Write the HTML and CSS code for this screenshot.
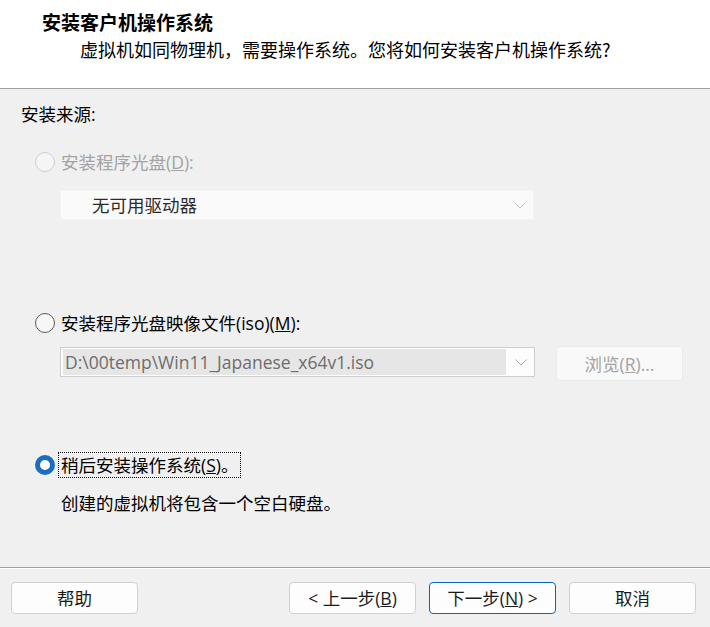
FILE: index.html
```html
<!DOCTYPE html>
<html lang="zh-CN">
<head>
<meta charset="utf-8">
<title>安装客户机操作系统</title>
<link rel="stylesheet" href="styles.css">
</head>
<body>
<div class="dialog">
  <header class="head">
    <h1 class="head-title">安装客户机操作系统</h1>
    <p class="head-sub">虚拟机如同物理机，需要操作系统。您将如何安装客户机操作系统?</p>
  </header>

  <main class="content">
    <div class="group-label">安装来源:</div>

    <div class="option option-first disabled">
      <span class="radio radio-disabled"></span>
      <span class="option-label">安装程序光盘(<u>D</u>):</span>
    </div>
    <div class="combo combo-disabled">
      <span class="combo-text">无可用驱动器</span>
      <svg class="chev" width="12" height="7" viewBox="0 0 12 7"><polyline points="0.5,0.5 6,6 11.5,0.5" fill="none" stroke="#bdbdbd" stroke-width="1"/></svg>
    </div>

    <div class="option option-second">
      <span class="radio"></span>
      <span class="option-label">安装程序光盘映像文件(iso)(<u>M</u>):</span>
    </div>
    <div class="file-row">
      <div class="combo combo-file">
        <span class="combo-sel">D:\00temp\Win11_Japanese_x64v1.iso</span>
        <svg class="chev" width="12" height="7" viewBox="0 0 12 7"><polyline points="0.5,0.5 6,6 11.5,0.5" fill="none" stroke="#a8a8a8" stroke-width="1"/></svg>
      </div>
      <button class="btn btn-browse">浏览(<u>R</u>)...</button>
    </div>

    <div class="option option-third">
      <span class="radio radio-checked"></span>
      <span class="option-label focus">稍后安装操作系统(<u>S</u>)。</span>
    </div>
    <p class="desc">创建的虚拟机将包含一个空白硬盘。</p>
  </main>

  <footer class="foot">
    <button class="btn btn-help">帮助</button>
    <div class="foot-right">
      <button class="btn">&lt; 上一步(<u>B</u>)</button>
      <button class="btn btn-default">下一步(<u>N</u>) &gt;</button>
      <button class="btn">取消</button>
    </div>
  </footer>
</div>
</body>
</html>
```
FILE: styles.css
```css
* { box-sizing: border-box; }
html, body { margin: 0; padding: 0; }
body {
  width: 710px;
  height: 627px;
  overflow: hidden;
  background: #f0f0f0;
  font-family: "Open Sans", "Noto Sans CJK SC", sans-serif;
  font-size: 17.5px;
  color: #000;
}
.dialog {
  display: flex;
  flex-direction: column;
  height: 627px;
}
.head {
  background: #fff;
  height: 89px;
  border-bottom: 1px solid #a0a0a0;
  padding: 10px 0 0 42px;
}
.head-title {
  margin: 0;
  font-family: "Noto Sans CJK SC", sans-serif;
  font-size: 19px;
  font-weight: 700;
  line-height: 24px;
}
.head-sub {
  margin: 3px 0 0 38px;
  font-family: "Noto Sans CJK SC", sans-serif;
  font-size: 18px;
  line-height: 24px;
}
.content {
  flex: 1;
  padding: 13px 0 0 21px;
  display: flex;
  flex-direction: column;
  align-items: flex-start;
}
.group-label { line-height: 24px; }
.option {
  display: flex;
  align-items: center;
  margin-left: 14px;
  height: 24px;
}
.option-first { margin-top: 24px; }
.option-second { margin-top: 91px; }
.option-third { margin-top: 72px; }
.disabled .option-label { color: #a3a3a3; }
.radio {
  width: 20px;
  height: 20px;
  border-radius: 50%;
  border: 1px solid #5b5b5b;
  background: #f7f7f7;
  margin-right: 6px;
  flex: none;
}
.radio-disabled { border-color: #cfcfcf; background: #f5f5f5; }
.radio-checked {
  border: 5px solid #1b6dc1;
  background: #fff;
}
.option-label { line-height: 24px; }
.focus {
  outline: 1px dotted #000;
  outline-offset: 0;
  margin-left: -2px;
  padding: 0 2px 0 2px;
}
.combo {
  display: flex;
  align-items: center;
  justify-content: space-between;
  height: 30px;
  margin-left: 39px;
}
.combo-disabled {
  margin-top: 16px;
  width: 474px;
  background: #fafafa;
  border: 1px solid #f3f3f3;
  padding: 0 7px 0 31px;
}
.combo-text { color: #2b2b2b; line-height: 24px; }
.file-row {
  display: flex;
  align-items: flex-start;
  margin-top: 11px;
  gap: 21px;
}
.combo-file {
  margin-top: 1px;
  width: 475px;
  background: #fdfdfd;
  border: 1px solid #cdcdcd;
  padding: 1px 7px 1px 2px;
}
.combo-sel {
  background: #e6e6e6;
  color: #6d6d6d;
  height: 26px;
  line-height: 26px;
  width: 443px;
  padding-left: 2px;
  white-space: nowrap;
}
.chev { flex: none; }
.desc {
  margin: 14px 0 0 40px;
  line-height: 24px;
}
.btn {
  font: inherit;
  font-size: 17.5px;
  color: #1b1b1b;
  height: 32px;
  width: 127px;
  background: #fdfdfd;
  border: 1px solid #d0d0d0;
  border-radius: 4px;
  padding: 0;
  line-height: 28px;
}
.btn-browse {
  width: 127px;
  height: 35px;
  background: #f9f9f9;
  border-color: #ebebeb;
  color: #a3a3a3;
}
.btn-default { border-color: #0a66c2; }
.foot {
  height: 60px;
  border-top: 1px solid #a0a0a0;
  box-shadow: inset 0 1px 0 #fff;
  display: flex;
  justify-content: space-between;
  align-items: flex-start;
  padding: 14px 14px 0 11px;
}
.foot-right { display: flex; gap: 13px; }
```
